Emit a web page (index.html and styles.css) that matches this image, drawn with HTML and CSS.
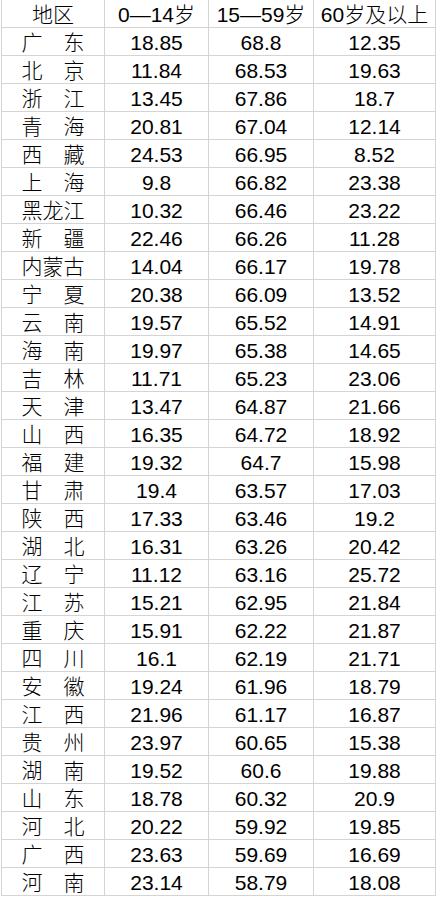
FILE: index.html
```html
<!DOCTYPE html>
<html lang="zh-CN">
<head>
<meta charset="utf-8">
<title>人口年龄结构</title>
<link rel="stylesheet" href="styles.css">
</head>
<body>
<div class="sheet">
  <div class="cell head">地区</div><div class="cell head">0—14岁</div><div class="cell head">15—59岁</div><div class="cell head">60岁及以上</div>
  <div class="cell name"><span class="dist"><span>广</span><span>东</span></span></div><div class="cell">18.85</div><div class="cell">68.8</div><div class="cell">12.35</div>
  <div class="cell name"><span class="dist"><span>北</span><span>京</span></span></div><div class="cell">11.84</div><div class="cell">68.53</div><div class="cell">19.63</div>
  <div class="cell name"><span class="dist"><span>浙</span><span>江</span></span></div><div class="cell">13.45</div><div class="cell">67.86</div><div class="cell">18.7</div>
  <div class="cell name"><span class="dist"><span>青</span><span>海</span></span></div><div class="cell">20.81</div><div class="cell">67.04</div><div class="cell">12.14</div>
  <div class="cell name"><span class="dist"><span>西</span><span>藏</span></span></div><div class="cell">24.53</div><div class="cell">66.95</div><div class="cell">8.52</div>
  <div class="cell name"><span class="dist"><span>上</span><span>海</span></span></div><div class="cell">9.8</div><div class="cell">66.82</div><div class="cell">23.38</div>
  <div class="cell name"><span class="dist"><span>黑</span><span>龙</span><span>江</span></span></div><div class="cell">10.32</div><div class="cell">66.46</div><div class="cell">23.22</div>
  <div class="cell name"><span class="dist"><span>新</span><span>疆</span></span></div><div class="cell">22.46</div><div class="cell">66.26</div><div class="cell">11.28</div>
  <div class="cell name"><span class="dist"><span>内</span><span>蒙</span><span>古</span></span></div><div class="cell">14.04</div><div class="cell">66.17</div><div class="cell">19.78</div>
  <div class="cell name"><span class="dist"><span>宁</span><span>夏</span></span></div><div class="cell">20.38</div><div class="cell">66.09</div><div class="cell">13.52</div>
  <div class="cell name"><span class="dist"><span>云</span><span>南</span></span></div><div class="cell">19.57</div><div class="cell">65.52</div><div class="cell">14.91</div>
  <div class="cell name"><span class="dist"><span>海</span><span>南</span></span></div><div class="cell">19.97</div><div class="cell">65.38</div><div class="cell">14.65</div>
  <div class="cell name"><span class="dist"><span>吉</span><span>林</span></span></div><div class="cell">11.71</div><div class="cell">65.23</div><div class="cell">23.06</div>
  <div class="cell name"><span class="dist"><span>天</span><span>津</span></span></div><div class="cell">13.47</div><div class="cell">64.87</div><div class="cell">21.66</div>
  <div class="cell name"><span class="dist"><span>山</span><span>西</span></span></div><div class="cell">16.35</div><div class="cell">64.72</div><div class="cell">18.92</div>
  <div class="cell name"><span class="dist"><span>福</span><span>建</span></span></div><div class="cell">19.32</div><div class="cell">64.7</div><div class="cell">15.98</div>
  <div class="cell name"><span class="dist"><span>甘</span><span>肃</span></span></div><div class="cell">19.4</div><div class="cell">63.57</div><div class="cell">17.03</div>
  <div class="cell name"><span class="dist"><span>陕</span><span>西</span></span></div><div class="cell">17.33</div><div class="cell">63.46</div><div class="cell">19.2</div>
  <div class="cell name"><span class="dist"><span>湖</span><span>北</span></span></div><div class="cell">16.31</div><div class="cell">63.26</div><div class="cell">20.42</div>
  <div class="cell name"><span class="dist"><span>辽</span><span>宁</span></span></div><div class="cell">11.12</div><div class="cell">63.16</div><div class="cell">25.72</div>
  <div class="cell name"><span class="dist"><span>江</span><span>苏</span></span></div><div class="cell">15.21</div><div class="cell">62.95</div><div class="cell">21.84</div>
  <div class="cell name"><span class="dist"><span>重</span><span>庆</span></span></div><div class="cell">15.91</div><div class="cell">62.22</div><div class="cell">21.87</div>
  <div class="cell name"><span class="dist"><span>四</span><span>川</span></span></div><div class="cell">16.1</div><div class="cell">62.19</div><div class="cell">21.71</div>
  <div class="cell name"><span class="dist"><span>安</span><span>徽</span></span></div><div class="cell">19.24</div><div class="cell">61.96</div><div class="cell">18.79</div>
  <div class="cell name"><span class="dist"><span>江</span><span>西</span></span></div><div class="cell">21.96</div><div class="cell">61.17</div><div class="cell">16.87</div>
  <div class="cell name"><span class="dist"><span>贵</span><span>州</span></span></div><div class="cell">23.97</div><div class="cell">60.65</div><div class="cell">15.38</div>
  <div class="cell name"><span class="dist"><span>湖</span><span>南</span></span></div><div class="cell">19.52</div><div class="cell">60.6</div><div class="cell">19.88</div>
  <div class="cell name"><span class="dist"><span>山</span><span>东</span></span></div><div class="cell">18.78</div><div class="cell">60.32</div><div class="cell">20.9</div>
  <div class="cell name"><span class="dist"><span>河</span><span>北</span></span></div><div class="cell">20.22</div><div class="cell">59.92</div><div class="cell">19.85</div>
  <div class="cell name"><span class="dist"><span>广</span><span>西</span></span></div><div class="cell">23.63</div><div class="cell">59.69</div><div class="cell">16.69</div>
  <div class="cell name"><span class="dist"><span>河</span><span>南</span></span></div><div class="cell">23.14</div><div class="cell">58.79</div><div class="cell">18.08</div>
</div>
</body>
</html>
```
FILE: styles.css
```css
html, body {
  margin: 0;
  padding: 0;
  background: #ffffff;
}
.sheet {
  display: grid;
  grid-template-columns: 103px 104px 105px 122px;
  grid-auto-rows: 28px;
  margin-left: 1px;
  width: 434px;
  border-left: 1px solid #d4d4d4;
  font-family: "Liberation Sans", "Noto Sans CJK SC", sans-serif;
  font-size: 21px;
  color: #000;
}
.cell {
  box-sizing: border-box;
  border-right: 1px solid #d4d4d4;
  border-bottom: 1px solid #d4d4d4;
  display: flex;
  align-items: center;
  justify-content: center;
  padding-top: 2px;
  line-height: 1;
  white-space: nowrap;
}
.head,
.dist {
  font-weight: 300;
}
.dist {
  display: flex;
  justify-content: space-between;
  width: 63px;
}
```
